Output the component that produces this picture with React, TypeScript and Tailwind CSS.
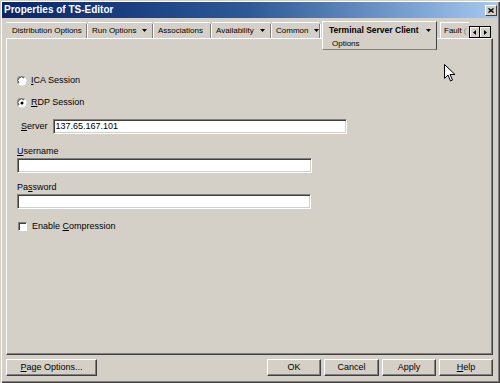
import React from 'react';

const Caret = () => (
  <svg width="5" height="3" viewBox="0 0 5 3" className="shrink-0">
    <path d="M0 0h5L2.5 3z" fill="#000" />
  </svg>
);

const Radio = ({ checked }: { checked?: boolean }) => (
  <svg width="10" height="10" viewBox="0 0 10 10" className="shrink-0">
    <circle cx="5" cy="5" r="4.5" fill="#fff" />
    <path d="M1.2 7.8A4.3 4.3 0 0 1 7.8 1.2" stroke="#808080" strokeWidth="1" fill="none" />
    <path d="M2 7A3.2 3.2 0 0 1 7 2" stroke="#404040" strokeWidth="1" fill="none" />
    {checked && <circle cx="5" cy="5" r="1.5" fill="#000" />}
  </svg>
);

const U = ({ children }: { children: React.ReactNode }) => <span className="underline underline-offset-[1px]">{children}</span>;

const Tab = ({ w, pl, label, caret }: { w: string; pl: string; label: string; caret?: boolean }) => (
  <div className="flex items-start">
    <div className={`${w} ${pl} h-[16px] flex items-center gap-[6px] border-t border-white text-[8px] leading-none whitespace-nowrap`}>
      <span>{label}</span>
      {caret && <Caret />}
    </div>
    <div className="mt-[2px] h-[14px] w-[2px] border-l border-[#808080] bg-white" />
  </div>
);

const Button = ({ children, w }: { children: React.ReactNode; w: string }) => (
  <button className={`${w} h-[17px] flex items-center justify-center text-[9px] leading-none border border-t-white border-l-white border-r-[#404040] border-b-[#404040] shadow-[inset_-1px_-1px_0_#808080] bg-[#d4d0c8]`}>
    {children}
  </button>
);

const Field = ({ w, value }: { w: string; value?: string }) => (
  <div className={`${w} h-[15px] bg-white border border-t-[#808080] border-l-[#808080] border-r-white border-b-white shadow-[inset_1px_1px_0_#404040,inset_-1px_-1px_0_#d4d0c8] flex items-center pl-[2px] text-[9px] leading-none`}>
    {value}
  </div>
);

export default function App() {
  return (
    <div className="w-[500px] h-[383px] bg-[#d4d0c8] p-[2px] flex flex-col relative shadow-[inset_1px_1px_0_#d4d0c8,inset_2px_2px_0_#fff,inset_-1px_-1px_0_#404040,inset_-2px_-2px_0_#808080] text-black [font-family:'Liberation_Sans',Arial,sans-serif] overflow-hidden">
      {/* title bar */}
      <div className="h-[16px] shrink-0 flex items-center justify-between pl-[2px] pr-[1px] bg-gradient-to-r from-[#0a246a] via-[#2d5a97] to-[#a6caf0]">
        <span className="text-white font-bold text-[10px] leading-none">Properties of TS-Editor</span>
        <div className="w-[12px] h-[11px] bg-[#d4d0c8] border border-t-white border-l-white border-r-[#404040] border-b-[#404040] flex items-center justify-center">
          <svg width="6" height="5" viewBox="0 0 6 5">
            <path d="M0.5 0.5l5 4M5.5 0.5l-5 4" stroke="#000" strokeWidth="1.4" />
          </svg>
        </div>
      </div>

      {/* tabs */}
      <div className="h-[20px] shrink-0 flex items-start pt-[4px] pl-[4px] relative z-10">
        <Tab w="w-[80px]" pl="pl-[6px]" label="Distribution Options" />
        <Tab w="w-[64px]" pl="pl-[4px]" label="Run Options" caret />
        <Tab w="w-[56px]" pl="pl-[4px]" label="Associations" />
        <Tab w="w-[58px]" pl="pl-[4px]" label="Availability" caret />
        <Tab w="w-[47px]" pl="pl-[4px]" label="Common" caret />
        <div className="-mt-[1px] ml-[1px] w-[115px] h-[29px] bg-[#d4d0c8] border border-t-white border-l-white border-r-[#404040] border-b-[#808080] flex flex-col pl-[6px] pt-[4px] gap-[5px] text-[8px] leading-none">
          <div className="flex items-center gap-[7px]">
            <span className="font-bold text-[8.5px]">Terminal Server Client</span>
            <Caret />
          </div>
          <span className="pl-[3px]">Options</span>
        </div>
        <div className="ml-[3px] w-[29px] h-[16px] border-t border-l border-white flex items-center pl-[3px] gap-[2px] text-[8px] leading-none overflow-hidden whitespace-nowrap">
          <span>Fault</span>
          <span className="text-[#808080]">(</span>
        </div>
        <div className="mt-[4px] flex border border-black">
          <div className="w-[10px] h-[10px] bg-[#d4d0c8] border-r border-black shadow-[inset_1px_1px_0_#fff] flex items-center justify-center">
            <svg width="3" height="5" viewBox="0 0 3 5"><path d="M3 0v5L0 2.5z" fill="#000" /></svg>
          </div>
          <div className="w-[10px] h-[10px] bg-[#d4d0c8] shadow-[inset_1px_1px_0_#fff] flex items-center justify-center">
            <svg width="3" height="5" viewBox="0 0 3 5"><path d="M0 0v5L3 2.5z" fill="#000" /></svg>
          </div>
        </div>
      </div>

      {/* panel */}
      <div className="flex-1 ml-[4px] mr-[5px] border border-t-white border-l-white border-r-[#404040] border-b-[#404040] shadow-[inset_-1px_-1px_0_#808080] flex flex-col pl-[10px] text-[9px] leading-none">
        <div className="mt-[36px] h-[11px] flex items-center gap-[4px]">
          <Radio />
          <span><U>I</U>CA Session</span>
        </div>
        <div className="mt-[11px] h-[11px] flex items-center gap-[4px]">
          <Radio checked />
          <span><U>R</U>DP Session</span>
        </div>
        <div className="mt-[11px] flex items-center pl-[4px] gap-[5px]">
          <span><U>S</U>erver</span>
          <Field w="w-[294px]" value="137.65.167.101" />
        </div>
        <div className="mt-[12px] h-[11px] flex items-center">
          <span><U>U</U>sername</span>
        </div>
        <div className="mt-[1px]">
          <Field w="w-[295px]" />
        </div>
        <div className="mt-[9px] h-[11px] flex items-center">
          <span>Pa<U>s</U>sword</span>
        </div>
        <div className="mt-[1px]">
          <Field w="w-[294px]" />
        </div>
        <div className="mt-[12px] h-[11px] flex items-center gap-[5px]">
          <div className="ml-[1px] w-[9px] h-[9px] bg-white border border-t-[#808080] border-l-[#808080] border-r-white border-b-white shadow-[inset_1px_1px_0_#404040]" />
          <span>Enable <U>C</U>ompression</span>
        </div>
      </div>

      {/* buttons */}
      <div className="h-[26px] shrink-0 flex items-start pt-[4px] pl-[4px] pr-[5px]">
        <Button w="w-[91px]"><span><U>P</U>age Options...</span></Button>
        <div className="flex-1" />
        <div className="flex gap-[3px]">
          <Button w="w-[54px]">OK</Button>
          <Button w="w-[55px]">Cancel</Button>
          <Button w="w-[54px]">Apply</Button>
          <Button w="w-[54px]"><span><U>H</U>elp</span></Button>
        </div>
      </div>

      {/* mouse pointer */}
      <svg className="absolute left-[444px] top-[64px]" width="12" height="18" viewBox="0 0 12 18">
        <path d="M0.5 0.5v14l3.5-3.5 2.5 6 2-1-2.5-5.5h5z" fill="#fff" stroke="#000" strokeWidth="1" strokeLinejoin="miter" />
      </svg>
    </div>
  );
}
